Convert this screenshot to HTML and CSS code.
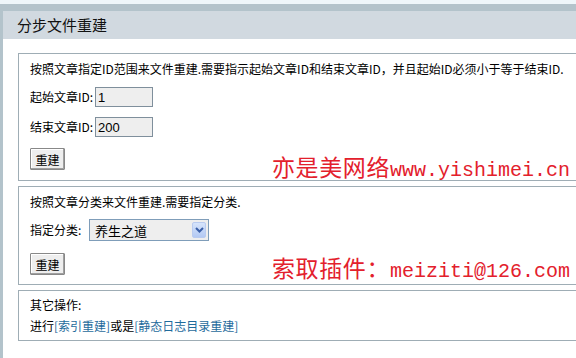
FILE: index.html
```html
<!DOCTYPE html>
<html lang="zh-CN">
  <head>
    <meta charset="UTF-8" />
    <title>分步文件重建</title>
    <link rel="stylesheet" href="styles.css">
  </head>
  <body>
    <div class="page">
      <div class="topline"></div>
      <div class="title">分步文件重建</div>
      <div class="content">
        <div class="box first">
          <div class="row">按照文章指定ID范围来文件重建.需要指示起始文章ID和结束文章ID，并且起始ID必须小于等于结束ID.</div>
          <div class="row field">
            <label>起始文章ID:</label>
            <input type="text" class="idinput" value="1" />
          </div>
          <div class="row field">
            <label>结束文章ID:</label>
            <input type="text" class="idinput" value="200" />
          </div>
          <div class="row btnrow">
            <button class="btn">重建</button>
          </div>
        </div>

        <div class="box">
          <div class="row">按照文章分类来文件重建.需要指定分类.</div>
          <div class="row field sel">
            <label>指定分类:</label>
            <div class="selectwrap">
              <select class="catselect">
                <option>养生之道</option>
              </select>
              <span class="arrow">
                <svg width="9" height="6" viewBox="0 0 9 6"><path d="M1 1 L4.5 4.5 L8 1" fill="none" stroke="#3a5fa8" stroke-width="2"/></svg>
              </span>
            </div>
          </div>
          <div class="row btnrow second">
            <button class="btn">重建</button>
          </div>
        </div>

        <div class="box last">
          <div class="row">其它操作:</div>
          <div class="row links">进行<a href="#">[索引重建]</a>或是<a href="#">[静态日志目录重建]</a></div>
        </div>

        <div class="mark mark1"><span class="cjk">亦是美网络</span><span class="lat">www.yishimei.cn</span></div>
        <div class="mark mark2"><span class="cjk">索取插件：</span><span class="lat">meiziti@126.com</span></div>
      </div>
    </div>
  </body>
</html>
```

FILE: styles.css
```css
html, body {
  margin: 0;
  padding: 0;
  overflow: hidden;
}

body {
  font-family: "Noto Sans CJK SC", sans-serif;
  font-size: 12px;
  color: #000;
  background-color: #eef6fa;
  width: 576px;
  height: 358px;
}

.page {
  margin-top: 4px;
  border-left: 3px solid #b3c3cb;
  background-color: #fff;
  height: 354px;
}

.topline {
  height: 7px;
  background-color: #b3c3cb;
}

.title {
  height: 28px;
  line-height: 28px;
  background-color: #d1d9e0;
  padding-left: 14px;
  font-size: 15px;
  color: #111;
}

.content {
  position: relative;
  padding: 14px 0 0 15px;
}

.box {
  width: 580px;
  border: 1px solid #9fadb5;
  padding: 7px 0 9px 11px;
  margin-bottom: 5px;
}

.box.first {
  padding-bottom: 10px;
}

.row {
  line-height: 16px;
  white-space: nowrap;
}

.field {
  display: flex;
  align-items: center;
  margin-top: 10px;
  height: 20px;
}

.field label {
  width: 65px;
}

.idinput {
  width: 52px;
  height: 18px;
  padding: 0 2px;
  margin: 0;
  border: 1px solid #7f8f9c;
  background-color: #eeeeee;
  font-family: "Liberation Sans", Arial, sans-serif;
  font-size: 13px;
  color: #000;
}

.sel {
  margin-top: 9px;
  height: 22px;
}

.sel label {
  width: 59px;
}

.selectwrap {
  position: relative;
  width: 120px;
  height: 22px;
}

.catselect {
  appearance: none;
  -webkit-appearance: none;
  width: 120px;
  height: 22px;
  margin: 0;
  padding: 0 0 0 5px;
  border: 1px solid #7f9db9;
  border-radius: 0;
  background-color: #eeeeee;
  font-family: "Noto Sans CJK SC", sans-serif;
  font-size: 13px;
  color: #000;
}

.arrow {
  position: absolute;
  right: 3px;
  top: 3px;
  width: 14px;
  height: 16px;
  display: flex;
  align-items: center;
  justify-content: center;
  background: linear-gradient(#d6e4fb, #b3c9f3);
  border: 1px solid #b9cbf0;
  border-radius: 2px;
  box-sizing: border-box;
}

.btnrow {
  margin-top: 11px;
  height: 22px;
}

.btnrow.second {
  margin-top: 12px;
}

.btn {
  width: 35px;
  height: 22px;
  padding: 0;
  font-family: "Noto Sans CJK SC", sans-serif;
  font-size: 12px;
  color: #000;
  background-color: #eeeeee;
  border: 1px solid #888;
  box-shadow: inset -1px -1px 0 #a0a0a0, inset 1px 1px 0 #fff;
  border-radius: 1px;
}

.box.last {
  padding-top: 6px;
  padding-bottom: 6px;
}

.links {
  margin-top: 5px;
}

.links a {
  color: #1f6b9c;
  text-decoration: none;
}

.mark {
  position: absolute;
  left: 269px;
  color: #e3202c;
  white-space: nowrap;
  line-height: 26px;
}

.mark1 {
  top: 114px;
}

.mark2 {
  top: 215px;
}

.mark .cjk {
  font-family: "Noto Sans CJK SC", serif;
  font-size: 23px;
  letter-spacing: 0.6px;
}

.mark .lat {
  font-family: "Liberation Mono", monospace;
  font-size: 20px;
}
```
